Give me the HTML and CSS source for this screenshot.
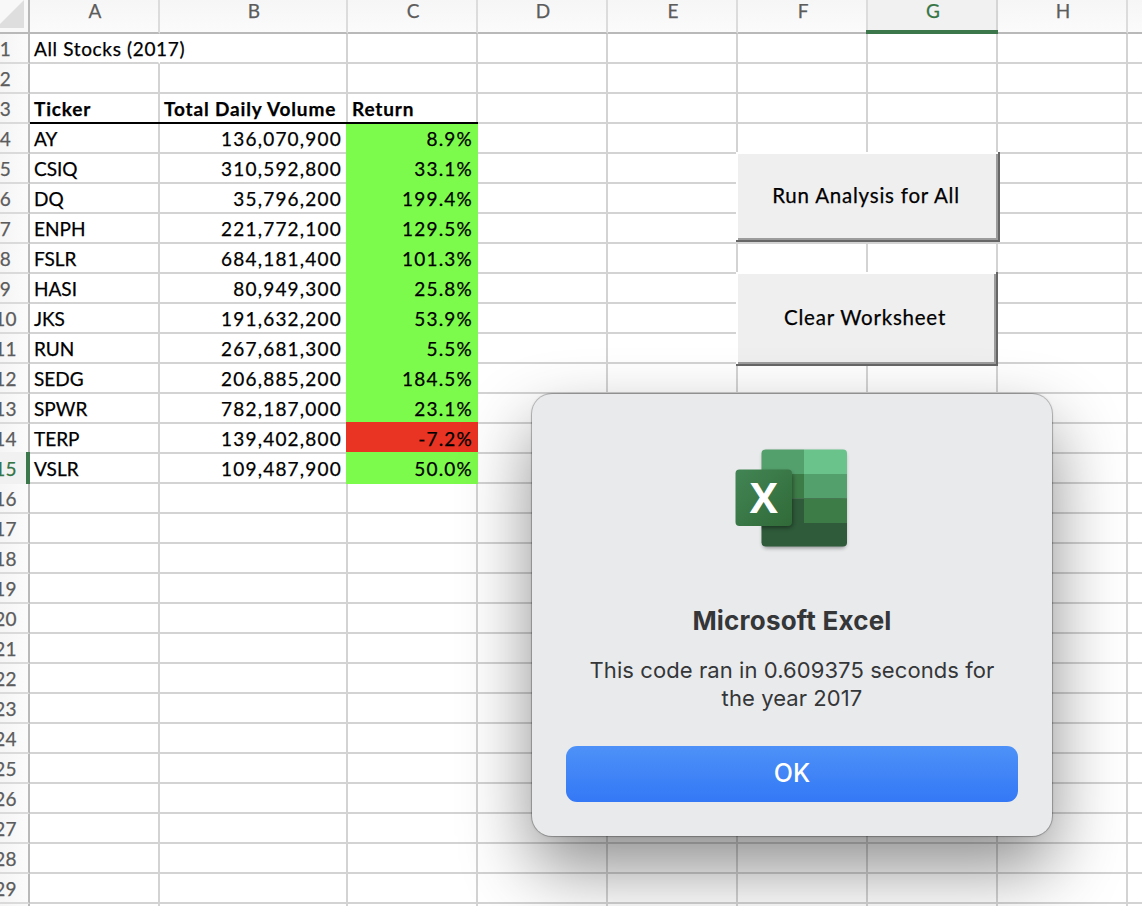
FILE: index.html
```html
<!DOCTYPE html>
<html lang="en">
<head>
<meta charset="utf-8">
<title>All Stocks (2017)</title>
<link rel="stylesheet" href="styles.css">
</head>
<body>
<main class="workbook">
  <div class="sheet" id="sheet"></div>
  <button class="macro-button macro-run">Run Analysis for All</button>
  <button class="macro-button macro-clear">Clear Worksheet</button>
  <section class="dialog" role="alertdialog">
    <svg class="app-icon" width="120" height="110" viewBox="0 0 120 110">
      <defs>
        <clipPath id="book"><rect x="29.500" y="5.500" width="85.500" height="97" rx="4"/></clipPath>
        <linearGradient id="tile" x1="0" y1="0" x2="1" y2="1">
          <stop offset="0" stop-color="#438555"/>
          <stop offset="1" stop-color="#306a38"/>
        </linearGradient>
        <filter id="soft" x="-30%" y="-30%" width="160%" height="160%"><feGaussianBlur stdDeviation="2"/></filter>
      </defs>
      <rect x="31" y="8" width="82.500" height="96" rx="4" fill="#000" opacity=".4" filter="url(#soft)"/>
      <g clip-path="url(#book)">
        <rect x="29" y="5" width="43" height="25" fill="#54a06d"/>
        <rect x="72" y="5" width="44" height="25" fill="#69c38b"/>
        <rect x="29" y="30" width="43" height="24.500" fill="#3d7b47"/>
        <rect x="72" y="30" width="44" height="24.500" fill="#54a06d"/>
        <rect x="29" y="54.500" width="87" height="49" fill="#2f5b3a"/>
        <rect x="72" y="54.500" width="44" height="24.500" fill="#3d7b47"/>
        <rect x="6" y="28" width="55" height="56" rx="5" fill="#000" opacity=".4" filter="url(#soft)"/>
      </g>
      <rect x="3.500" y="25.500" width="56.500" height="56.500" rx="4" fill="url(#tile)"/>
      <text class="icon-letter" x="31.800" y="69" text-anchor="middle">X</text>
    </svg>
    <h1 class="dialog-title">Microsoft Excel</h1>
    <p class="dialog-message">This code ran in 0.609375 seconds for<br>the year 2017</p>
    <button class="dialog-ok">OK</button>
  </section>
</main>
<script src="sheet.js"></script>
</body>
</html>
```
FILE: styles.css
```css
* { box-sizing: border-box; }
body { margin: 0; }
.workbook {
  position: relative;
  width: 1142px;
  height: 906px;
  overflow: hidden;
  background: #fff;
  font-family: Lato, "Open Sans", sans-serif;
}
.sheet {
  display: grid;
  grid-template-columns: 30px 130px 188px 130px 130px 130px 130px 130px 130px 130px;
  grid-template-rows: 34px;
  grid-auto-rows: 30px;
  font-size: 19px;
  line-height: 30px;
  color: #000;
  -webkit-text-stroke: 0.25px currentColor;
}
.cell {
  border-right: 2px solid #d3d3d3;
  border-bottom: 2px solid #d3d3d3;
  padding: 0 4px;
  white-space: nowrap;
  min-width: 0;
}
.spill { border-right-color: transparent; letter-spacing: 0.65px; }
.number { text-align: right; letter-spacing: 1.2px; }
.cell.volume { padding-right: 4px; }
.cell.gain, .cell.loss { padding-right: 3px; }
.heading {
  position: relative;
  z-index: 1;
  margin-bottom: 2px;
  border-bottom: 0;
  box-shadow: 0 2px 0 #000;
  font-weight: 700;
  letter-spacing: 0.85px;
}
.gain, .loss { position: relative; border-color: transparent; background: var(--fill); }
.gain { --fill: #7dfb4c; }
.loss { --fill: #e93323; }
.gain, .loss {
  box-shadow: -2px 0 0 var(--fill), 0 -2px 0 var(--fill), -2px -2px 0 var(--fill);
}
.col-head {
  display: flex;
  justify-content: center;
  padding-bottom: 11px;
  padding-left: 2px;
  align-items: center;
  border-right: 2px solid #dcdcdc;
  border-bottom: 2px solid #b9b9b9;
  background: linear-gradient(#f6f6f6, #fbfbfb);
  color: #5c5c5c;
}
.col-head.active {
  position: relative;
  margin-left: -2px;
  border-right: 0;
  border-bottom: 4px solid #3b774a;
  box-shadow: inset 2px 0 0 #dcdcdc, inset -2px 0 0 #d5d5d5;
  background: #f1f1f1;
  color: #367445;
  padding-bottom: 9px;
}
.corner {
  border-right: 2px solid #b9b9b9;
  border-bottom: 2px solid #b9b9b9;
  background: #f8f8f8;
}
.corner svg { display: block; }
.row-head {
  margin-left: -18px;
  border-right: 2px solid #b9b9b9;
  border-bottom: 2px solid #dadada;
  background: linear-gradient(90deg, #f5f5f5 40%, #fbfbfb);
  color: #5c5c5c;
  text-align: center;
  letter-spacing: 0.3px;
  padding-left: 1px;
}
.row-head.active {
  position: relative;
  margin-top: -2px;
  padding-top: 2px;
  padding-left: 3px;
  border-right: 4px solid #3b774a;
  border-bottom: 0;
  background: #f1f1f1;
  color: #367445;
}
.macro-button {
  position: absolute;
  left: 736px;
  margin: 0;
  padding: 0 2px 2px 0;
  border: solid #666;
  border-width: 0 2px 2px 0;
  background: #efefef;
  box-shadow: inset 2px 2px 0 #fff, inset -2px -2px 0 #9c9c9c;
  font: 20.500px Lato, "Open Sans", sans-serif;
  letter-spacing: 0.78px;
  color: #000;
  -webkit-text-stroke: 0.25px currentColor;
}
.macro-run { top: 152px; width: 264px; height: 90px; }
.macro-clear { top: 272px; width: 262px; height: 94px; }
.dialog {
  position: absolute;
  left: 532px;
  top: 394px;
  width: 520px;
  height: 442px;
  padding: 50px 34px 34px;
  display: flex;
  flex-direction: column;
  align-items: center;
  border-radius: 20px;
  background: #e8eaec;
  box-shadow: 0 0 0 1px rgba(0,0,0,.2), 0 0 3px rgba(0,0,0,.2), 0 32px 70px rgba(0,0,0,.45);
  font-family: Inter, "Liberation Sans", sans-serif;
  color: #353638;
}
.app-icon { flex: none; }
.icon-letter { font: 700 42px "Open Sans", sans-serif; fill: #fff; }
.dialog-title { margin: 50px 0 0; font-size: 26px; line-height: 34px; font-weight: 700; letter-spacing: 0.2px; }
.dialog-message {
  margin: 18px 0 0;
  font-size: 22px;
  line-height: 28px;
  letter-spacing: 0.08px;
  text-align: center;
  white-space: nowrap;
}
.dialog-ok {
  width: 452px;
  height: 56px;
  flex: none;
  margin-top: auto;
  padding: 0 0 2px;
  border: 0;
  border-radius: 11px;
  background: linear-gradient(#4d91f8, #3478f6);
  color: #fff;
  font: 500 25px Inter, "Liberation Sans", sans-serif;
}
```
FILE: sheet.js
```js
const columns = ["A", "B", "C", "D", "E", "F", "G", "H", ""];
const rows = {
  1: ["All Stocks (2017)"],
  3: ["Ticker", "Total Daily Volume", "Return"],
  4: ["AY", "136,070,900", "8.9%"],
  5: ["CSIQ", "310,592,800", "33.1%"],
  6: ["DQ", "35,796,200", "199.4%"],
  7: ["ENPH", "221,772,100", "129.5%"],
  8: ["FSLR", "684,181,400", "101.3%"],
  9: ["HASI", "80,949,300", "25.8%"],
  10: ["JKS", "191,632,200", "53.9%"],
  11: ["RUN", "267,681,300", "5.5%"],
  12: ["SEDG", "206,885,200", "184.5%"],
  13: ["SPWR", "782,187,000", "23.1%"],
  14: ["TERP", "139,402,800", "-7.2%"],
  15: ["VSLR", "109,487,900", "50.0%"]
};
const sheet = document.getElementById("sheet");

function add(className, text) {
  const el = document.createElement("div");
  el.className = className;
  el.textContent = text;
  sheet.append(el);
  return el;
}

add("corner", "").innerHTML =
  '<svg width="28" height="32"><path d="M0 24 24 0V28H0Z" fill="#dedede"/></svg>';
columns.forEach(name => add("col-head" + (name === "G" ? " active" : ""), name));

for (let r = 1; r <= 30; r++) {
  add("row-head" + (r === 15 ? " active" : ""), r);
  columns.forEach((_, c) => {
    const text = (rows[r] || [])[c] || "";
    let cls = "cell";
    if (r === 1 && c === 0) cls += " spill";
    if (r === 3 && c < 3) cls += " heading";
    if (r > 3 && text && c === 1) cls += " number volume";
    if (r > 3 && text && c === 2) cls += " number " + (text[0] === "-" ? "loss" : "gain");
    add(cls, text);
  });
}
```
